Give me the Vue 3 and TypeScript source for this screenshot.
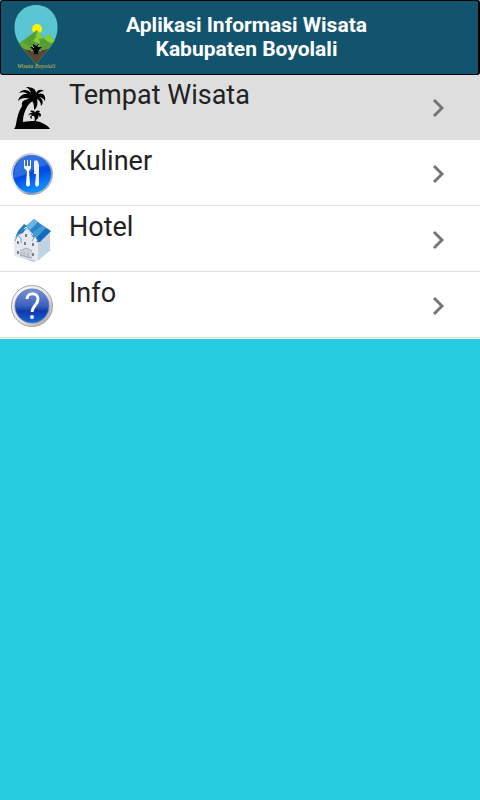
<script setup lang="ts">
import { ref } from 'vue'

type IconName = 'palm' | 'food' | 'hotel' | 'info'

interface MenuItem {
  id: IconName
  label: string
}

const items: MenuItem[] = [
  { id: 'palm', label: 'Tempat Wisata' },
  { id: 'food', label: 'Kuliner' },
  { id: 'hotel', label: 'Hotel' },
  { id: 'info', label: 'Info' },
]

const selected = ref<IconName>('palm')
</script>

<template>
  <div class="screen">
    <header class="bar">
      <svg class="logo" viewBox="0 0 48 66" aria-hidden="true">
        <defs>
          <clipPath id="pin">
            <path d="M26 0C38 0 47.500 9 47.500 22C47.500 30 45 35 41 41L26 59L11 41C7 35 4.500 30 4.500 22C4.500 9 14 0 26 0Z" />
          </clipPath>
        </defs>
        <g clip-path="url(#pin)">
          <rect width="48" height="60" fill="#5bc5d3" />
          <circle cx="27" cy="24" r="5" fill="#fff200" />
          <path d="M3 43L27 25L35 34L39 29L48 39V60H3Z" fill="#579c35" />
          <path d="M27 25L34 33L29 34L30 39L23 36L26 32ZM39 29L46 37L40 38L34 34Z" fill="#83cf38" />
          <path d="M3 44L13 37L22 43L35 45L44 40V60H3Z" fill="#65a936" />
          <path d="M8 42L17 45L34 45L45 42L40 60H10Z" fill="#57472f" />
        </g>
        <path d="M24 49L24 46L21 46L22 44L20 42L23 42L23 39L26 41L29 39L29 42L32 42L30 44L31 46L28 46L28 49Z" fill="#080908" />
        <path d="M22 41L24 43M29 40L28 42M21 46L23 45M31 46L29 45" stroke="#ccc" />
        <text x="26" y="63" text-anchor="middle" class="logo-text">Wisata Boyolali</text>
      </svg>
      <h1 class="title">Aplikasi Informasi Wisata<br />Kabupaten Boyolali</h1>
    </header>

    <nav class="nav" aria-label="Menu">
      <ul class="menu">
        <li v-for="item in items" :key="item.id">
          <button class="row" :class="{ active: selected === item.id }" type="button" @click="selected = item.id">
            <svg v-if="item.id === 'palm'" class="icon" viewBox="0 0 44 44" aria-hidden="true">
              <path d="M4 43C6 41 6 37 7 33C9 24 13 16 20 12L24 14C17 18 13 27 13 36C17 35 21 35 26 35C31 36 38 39 40 43Z" />
              <path d="M20 13C15 11 11 12 8 15C9 10 14 7 18 8C15 6 12 6 9 7C12 3 18 3 21 7C20 4 18 2 16 1C22 1 26 3 26 7C28 3 31 3 34 5C31 5 30 6 28 8C33 6 36 9 35 15C33 12 31 11 29 11C33 13 34 17 31 20C31 16 29 14 27 13C28 18 27 22 24 24C24 20 24 17 22 15C20 16 19 18 16 18L18 15C15 16 13 18 13 21C10 17 13 13 20 13Z" />
              <path d="M24 36C25 34 25 32 24 30C22 29 21 31 22 33C19 32 20 30 22 29C20 28 19 29 18 30C19 27 21 26 23 27L20 25C23 24 25 25 25 27C26 24 29 24 30 26L28 27C31 27 32 29 30 31L28 29C29 31 28 33 26 34L25 30C26 32 26 34 26 36Z" />
            </svg>

            <svg v-else-if="item.id === 'food'" class="icon" viewBox="0 0 44 44" aria-hidden="true">
              <defs>
                <linearGradient id="food-rim" x1="0" y1="0" x2="1" y2="1">
                  <stop offset="0" stop-color="#929ba5" />
                  <stop offset="0.400" stop-color="#f3f3f3" />
                  <stop offset="0.700" stop-color="#8c98aa" />
                  <stop offset="1" stop-color="#e7e7e7" />
                </linearGradient>
                <linearGradient id="food-blue" x1="0" y1="0" x2="0.300" y2="1">
                  <stop offset="0" stop-color="#235bd4" />
                  <stop offset="0.600" stop-color="#004be4" />
                  <stop offset="1" stop-color="#118cff" />
                </linearGradient>
              </defs>
              <circle cx="22" cy="22" r="21" fill="url(#food-rim)" />
              <circle cx="22" cy="22" r="19" fill="url(#food-blue)" />
              <path d="M4 26C4 10 12 3 23 3C32 3 37 8 39 13C27 13 17 24 4 26Z" fill="#5389e7" opacity="0.500" />
              <path d="M14 8H15V14H17V8H18V14H20V8H21V16L19 19L20 33Q18 36 16 33L17 19L14 16Z" fill="#fff" />
              <path d="M24 9Q29 6 29 16V33Q27 36 25 33L26 22H24Z" fill="#eef0fa" />
            </svg>

            <svg v-else-if="item.id === 'hotel'" class="icon" viewBox="0 0 44 44" aria-hidden="true">
              <path d="M6 38L24 44L41 32L38 29Z" fill="#c3c5ca" />
              <path d="M4 20L15 9L28 22V43L4 38Z" fill="#e6e9f0" />
              <path d="M28 23L40 14V32L28 43Z" fill="#c9d0de" />
              <path d="M5 20L8 13L14 6L18 8L13 15L8 17Z" fill="#2b7fc0" />
              <path d="M14 10L24 1L32 7L24 18L16 10Z" fill="#2a84c8" />
              <path d="M16 8L24 1L28 4L20 12Z" fill="#69b5df" />
              <path d="M21 16L32 7L41 13L30 24L27 24Z" fill="#0f6fbd" />
              <path d="M21 16L32 7L36 10L26 20Z" fill="#4799d3" />
              <path d="M14 11L16 9L23 17" fill="none" stroke="#f5f8fc" />
              <path d="M5 23L8 17L11 21V25M22 23L25 18L28 23" fill="#f3f7fc" stroke="#5b9dce" />
              <path d="M8 23V26M8 33V36M16 16V19M15 24V27M23 25V28M23 35V38" stroke="#777d89" stroke-width="2" />
              <path d="M33 28V31M37 24V27M33 35V38M37 31V34" stroke="#9bddf5" stroke-width="2" />
              <path d="M10 33L16 30L22 33V41L10 38Z" fill="#ced4db" />
              <path d="M10 33L16 30L22 33M11 34V38M14 34V39M18 35V40M10 37L22 40" fill="none" stroke="#a4acb6" />
            </svg>

            <svg v-else class="icon" viewBox="0 0 44 44" aria-hidden="true">
              <defs>
                <linearGradient id="info-rim" x1="0" y1="0" x2="1" y2="1">
                  <stop offset="0" stop-color="#fff" />
                  <stop offset="0.600" stop-color="#dfdfdf" />
                  <stop offset="1" stop-color="#969696" />
                </linearGradient>
                <linearGradient id="info-blue" x1="0" y1="0" x2="0" y2="1">
                  <stop offset="0" stop-color="#7792d6" />
                  <stop offset="0.500" stop-color="#3c60be" />
                  <stop offset="0.650" stop-color="#0f38a8" />
                  <stop offset="1" stop-color="#1766da" />
                </linearGradient>
              </defs>
              <circle cx="22" cy="22" r="20.500" fill="url(#info-rim)" stroke="#a5a5a5" />
              <circle cx="22" cy="22" r="17" fill="url(#info-blue)" stroke="#637cb4" />
              <path d="M17 15C17 8 28 8 28 15C28 21 22 22 22 28" fill="none" stroke="#fff" stroke-width="3" />
              <circle cx="22" cy="33" r="2" fill="#fff" />
            </svg>

            <span class="label">{{ item.label }}</span>
            <svg class="chevron" viewBox="0 0 12 20" aria-hidden="true">
              <path d="M2 2L10 10L2 18" />
            </svg>
          </button>
        </li>
      </ul>
    </nav>
  </div>
</template>

<style>
body {
  background: #27cbdf;
}
</style>

<style scoped>
.screen {
  display: flow-root;
  min-height: 100vh;
  background: #27cbdf;
  font-family: Roboto, "Liberation Sans", sans-serif;
}

.bar {
  position: relative;
  display: grid;
  grid-template-columns: 48px 1fr 48px;
  align-items: start;
  min-height: 75px;
  box-sizing: border-box;
  margin-bottom: -1px;
  padding: 4px 9px 3px;
  border: 1px solid #000;
  border-right-width: 2px;
  border-radius: 3px;
  background: #12546d;
}

.logo {
  width: 48px;
  height: 66px;
}

.logo-text {
  font: italic 6px "Liberation Serif", serif;
  fill: #c9bd58;
}

.title {
  margin: 0;
  padding: 8px 0 0 14px;
  color: #fff;
  font-size: 21px;
  font-weight: 700;
  line-height: 24px;
  text-align: center;
}

.nav {
  padding-bottom: 1px;
  background: #fff;
}

.menu {
  margin: 0;
  padding: 0;
  list-style: none;
}

.row {
  display: flex;
  align-items: center;
  width: 100%;
  height: 66px;
  padding: 3px 36px 0 10px;
  border: 0;
  border-bottom: 1px solid #e0e0e0;
  background: #fff;
  color: #222;
  font: inherit;
  text-align: left;
  cursor: pointer;
}

.row.active {
  background: #dedede;
}

.icon {
  flex: none;
  width: 44px;
  height: 44px;
}

.label {
  flex: 1;
  align-self: flex-start;
  padding: 2px 0 0 15px;
  font-size: 27px;
  line-height: 32px;
}

.chevron {
  flex: none;
  width: 12px;
  height: 20px;
  fill: none;
  stroke: #757575;
  stroke-width: 3;
}
</style>
